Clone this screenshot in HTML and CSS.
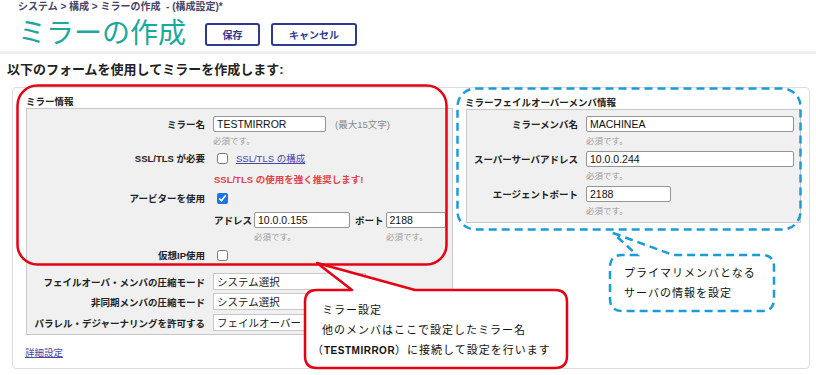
FILE: index.html
```html
<!DOCTYPE html>
<html lang="ja">
<head>
  <meta charset="UTF-8" />
  <meta name="viewport" content="width=device-width, initial-scale=1.0"/>
  <title>ミラーの作成</title>
  <link rel="stylesheet" href="styles.css">
</head>
<body>
  <div class="breadcrumb">システム &gt; 構成 &gt; ミラーの作成 &nbsp;- (構成設定)*</div>

  <div class="title-row">
    <h1>ミラーの作成</h1>
    <button class="btn btn-save">保存</button>
    <button class="btn btn-cancel">キャンセル</button>
  </div>
  <div class="separator"></div>

  <h2 class="lead">以下のフォームを使用してミラーを作成します:</h2>

  <div class="panel">
    <div class="col-left">
      <div class="legend">ミラー情報</div>
      <div class="group group-left">
        <div class="row">
          <label class="flabel">ミラー名</label>
          <input class="text w-name" type="text" value="TESTMIRROR">
          <span class="note">(最大15文字)</span>
        </div>
        <div class="hint">必須です。</div>

        <div class="row">
          <label class="flabel">SSL/TLS が必要</label>
          <input type="checkbox">
          <a class="link link-ssl" href="#">SSL/TLS の構成</a>
        </div>
        <div class="warn">SSL/TLS の使用を強く推奨します!</div>

        <div class="row">
          <label class="flabel">アービターを使用</label>
          <input type="checkbox" checked>
        </div>
        <div class="row row-addr">
          <span class="sublabel">アドレス</span>
          <input class="text w-addr" type="text" value="10.0.0.155">
          <span class="sublabel sublabel-port">ポート</span>
          <input class="text w-port" type="text" value="2188">
        </div>
        <div class="hint hint-addr"><span class="hint-first">必須です。</span><span>必須です。</span></div>

        <div class="row row-vip">
          <label class="flabel">仮想IP使用</label>
          <input type="checkbox">
        </div>

        <div class="row row-sel1">
          <label class="flabel">フェイルオーバ・メンバの圧縮モード</label>
          <select class="select"><option>システム選択</option></select>
        </div>
        <div class="row row-sel2">
          <label class="flabel">非同期メンバの圧縮モード</label>
          <select class="select"><option>システム選択</option></select>
        </div>
        <div class="row row-sel3">
          <label class="flabel">パラレル・デジャーナリングを許可する</label>
          <select class="select"><option>フェイルオーバー・メンバ</option></select>
        </div>
      </div>
      <a class="link link-more" href="#">詳細設定</a>
    </div>

    <div class="col-right">
      <div class="legend">ミラーフェイルオーバーメンバ情報</div>
      <div class="group group-right">
        <div class="row">
          <label class="flabel">ミラーメンバ名</label>
          <input class="text w-wide" type="text" value="MACHINEA">
        </div>
        <div class="hint">必須です。</div>
        <div class="row row-next">
          <label class="flabel">スーパーサーバアドレス</label>
          <input class="text w-wide" type="text" value="10.0.0.244">
        </div>
        <div class="hint">必須です。</div>
        <div class="row row-next">
          <label class="flabel">エージェントポート</label>
          <input class="text w-agent" type="text" value="2188">
        </div>
        <div class="hint">必須です。</div>
      </div>
    </div>
  </div>

  <!-- annotation overlay -->
  <svg class="marks" width="816" height="375" viewBox="0 0 816 375">
    <rect x="17.5" y="85.5" width="429" height="179" rx="20" fill="none" stroke="#e60012" stroke-width="2.5"/>
    <path d="M317 263 L415 290 L555 290 Q567 290 567 302 L567 356 Q567 368 555 368 L317 368 Q305 368 305 356 L305 302 Q305 290 317 290 L352 290 Z" fill="#fff" stroke="#e60012" stroke-width="2.5" stroke-linejoin="round"/>
    <rect x="457.5" y="88.5" width="343" height="141" rx="18" fill="none" stroke="#1b9bd7" stroke-width="2.5" stroke-dasharray="8 5"/>
    <path d="M613 233 L673 255 L762 255 Q774 255 774 267 L774 299 Q774 311 762 311 L622 311 Q610 311 610 299 L610 267 Q610 255 622 255 L637 255 Z" fill="#fff" stroke="#1b9bd7" stroke-width="2.5" stroke-dasharray="8 5"/>
  </svg>

  <div class="callout callout-red">
    <div>ミラー設定</div>
    <div>他のメンバはここで設定したミラー名</div>
    <div class="callout-shift">（<b>TESTMIRROR</b>）に接続して設定を行います</div>
  </div>
  <div class="callout callout-blue">
    <div>プライマリメンバとなる</div>
    <div>サーバの情報を設定</div>
  </div>
</body>
</html>
```

FILE: styles.css
```css
body {
  margin: 0;
  position: relative;
  width: 816px;
  height: 375px;
  overflow: hidden;
  font-family: "Liberation Sans", "Noto Sans CJK JP", sans-serif;
  color: #222;
  background-color: #fff;
}

.breadcrumb {
  padding: 1px 0 0 18px;
  font-size: 10px;
  line-height: 12px;
  font-weight: bold;
  color: #46466a;
}

.title-row {
  display: flex;
  align-items: center;
  height: 28px;
  margin-top: 7px;
  padding-left: 18px;
}

.title-row h1 {
  margin: 0 19px 0 0;
  font-size: 28px;
  line-height: 28px;
  font-weight: normal;
  color: #1ba99c;
}

.btn {
  height: 23px;
  padding: 0;
  border: 2px solid #2f3a8f;
  border-radius: 3px;
  background-color: #fff;
  color: #2f3a8f;
  font-family: inherit;
  font-size: 10px;
  font-weight: bold;
}

.btn-save {
  width: 55px;
}

.btn-cancel {
  width: 86px;
  margin-left: 11px;
}

.separator {
  height: 3px;
  margin-top: 3px;
  background-color: #eeeeee;
}

.lead {
  margin: 8px 0 0 0;
  padding-left: 7px;
  font-size: 13px;
  line-height: 16px;
  font-weight: bold;
}

.panel {
  display: flex;
  gap: 13px;
  box-sizing: border-box;
  width: 798px;
  height: 282px;
  margin: 9px 0 0 12px;
  padding: 7px 8px 0 13px;
  border: 1px solid #dddddd;
  border-radius: 4px;
}

.col-left {
  width: 427px;
}

.col-right {
  width: 335px;
  padding-top: 1px;
}

.legend {
  height: 13px;
  font-size: 9.5px;
  line-height: 13px;
  font-weight: bold;
}

.col-right .legend {
  margin-left: -1px;
}

.group {
  border: 1px solid #c8c8c8;
  background-color: #f0f0f0;
}

.group-left {
  padding: 7px 0 3px 0;
}

.group-right {
  padding: 6px 0 2px 0;
}

.row {
  display: flex;
  align-items: center;
  height: 16px;
}

.flabel {
  flex: 0 0 178px;
  margin-right: 8px;
  text-align: right;
  font-size: 9.5px;
  font-weight: bold;
  white-space: nowrap;
}

.group-right .flabel {
  flex-basis: 111px;
}

.text {
  box-sizing: border-box;
  height: 16px;
  margin: 0;
  padding: 0 3px;
  border: 1px solid #959595;
  border-radius: 2px;
  background-color: #fff;
  font-family: inherit;
  font-size: 10.5px;
  color: #111;
}

.w-name { width: 113px; }
.w-addr { width: 96px; }
.w-port { width: 60px; }
.w-wide { width: 208px; }
.w-agent { width: 85px; }

.note {
  margin-left: 9px;
  font-size: 9.5px;
  color: #888;
}

.hint {
  height: 18px;
  padding-left: 186px;
  font-size: 8.5px;
  line-height: 18px;
  color: #9a9a9a;
}

.group-right .hint {
  padding-left: 119px;
}

.hint-addr {
  padding-left: 227px;
}

.hint-first {
  display: inline-block;
  width: 132px;
}

input[type="checkbox"] {
  width: 11px;
  height: 11px;
  margin: 0 0 0 4px;
  accent-color: #1a73e8;
}

.link {
  color: #4747a8;
  font-size: 9.5px;
  text-decoration: underline;
}

.link-ssl {
  margin-left: 8px;
}

.warn {
  box-sizing: border-box;
  height: 24px;
  padding: 4px 0 0 187px;
  font-size: 9.5px;
  line-height: 20px;
  font-weight: bold;
  color: #e2434a;
}

.row-addr {
  margin-top: 6px;
  padding-left: 187px;
}

.sublabel {
  font-size: 9.5px;
  font-weight: bold;
  margin-right: 2px;
}

.sublabel-port {
  margin-left: 5px;
}

.row-vip {
  height: 18px;
}

.row-sel1 { height: 17px; margin-top: 9px; }
.row-sel2 { height: 17px; margin-top: 3px; }
.row-sel3 { height: 17px; margin-top: 4px; }

.select {
  appearance: none;
  box-sizing: border-box;
  width: 153px;
  height: 17px;
  margin: 0;
  padding: 0 3px;
  border: 1px solid #c8c8c8;
  border-radius: 0;
  background-color: #fff;
  font-family: inherit;
  font-size: 10.5px;
  color: #222;
}

.row-next {
  margin-top: 1px;
}

.link-more {
  display: block;
  margin: 11px 0 0 -1px;
  font-size: 9.5px;
  line-height: 14px;
}

.marks {
  position: absolute;
  left: 0;
  top: 0;
  pointer-events: none;
}

.callout {
  position: absolute;
  font-family: "Noto Sans CJK JP", sans-serif;
  font-size: 11px;
  line-height: 20px;
  letter-spacing: 1px;
  color: #111;
}

.callout b {
  font-family: "Liberation Sans", sans-serif;
  font-size: 10px;
  letter-spacing: 0.5px;
}

.callout-red {
  left: 322px;
  top: 299px;
}

.callout-shift {
  margin-left: -10px;
}

.callout-blue {
  left: 624px;
  top: 262px;
}
```
